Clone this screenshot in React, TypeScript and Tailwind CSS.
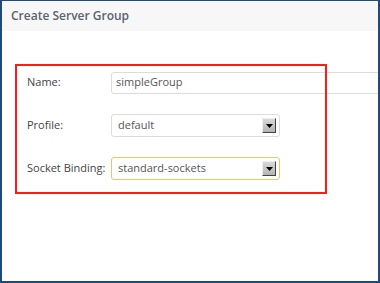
import React from "react";

function SelectBox({ value, focused }: { value: string; focused?: boolean }) {
  return (
    <div
      className={`flex shrink-0 items-center justify-between w-[169px] h-[23px] rounded-[3px] bg-white pl-[6px] pr-[3px] border ${
        focused ? "border-[#f0c36d]" : "border-[#dcdcdc]"
      }`}
    >
      <span className="text-[11px] text-[#555]">{value}</span>
      <div className="flex items-center justify-center w-[14px] h-[15px] bg-gradient-to-b from-[#d8d8d8] to-[#b4b4b4] border border-t-[#eee] border-l-[#eee] border-r-[#444] border-b-[#444]">
        <svg width="7" height="4" viewBox="0 0 7 4">
          <polygon points="0,0 7,0 3.5,4" fill="#000" />
        </svg>
      </div>
    </div>
  );
}

function Row({ label, children }: { label: string; children: React.ReactNode }) {
  return (
    <div className="flex items-center h-[23px]">
      <span className="w-[84px] shrink-0 text-[11px] text-[#444]">{label}</span>
      {children}
    </div>
  );
}

export default function App() {
  return (
    <div
      className="relative w-[380px] h-[283px] overflow-hidden bg-white border-2 border-t border-[#1f4a7c]"
      style={{ fontFamily: '"Open Sans", "Noto Sans", sans-serif' }}
    >
      <header className="h-[30px] bg-[#f7f7f7] flex items-center pl-[9px]">
        <h1 className="text-[12px] font-semibold text-[#5b6370]">Create Server Group</h1>
      </header>

      <div className="flex flex-col gap-[20px] pt-[40px] pl-[25px]">
        <Row label="Name:">
          <div className="flex shrink-0 items-center w-[290px] h-[22px] rounded-[3px] border border-[#dcdcdc] pl-[4px]">
            <span className="text-[11px] text-[#555]">simpleGroup</span>
          </div>
        </Row>
        <Row label="Profile:">
          <SelectBox value="default" />
        </Row>
        <Row label="Socket Binding:">
          <SelectBox value="standard-sockets" focused />
        </Row>
      </div>

      <div className="absolute left-[13px] top-[63px] w-[312px] h-[130px] border-2 border-[#ff1a1a]" />
    </div>
  );
}
